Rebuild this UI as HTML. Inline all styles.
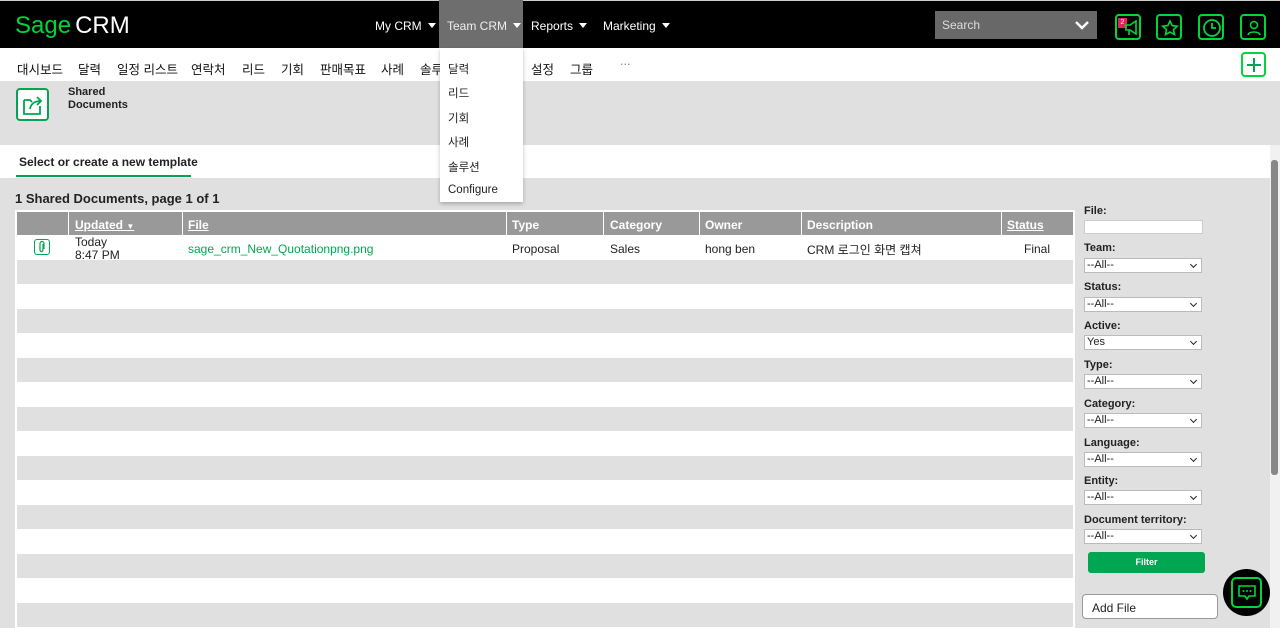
<!DOCTYPE html>
<html><head><meta charset="utf-8"><style>
*{box-sizing:border-box;margin:0;padding:0}
body{width:1280px;height:628px;overflow:hidden;background:#e0e0e0;font-family:"Liberation Sans","Noto Sans CJK KR",sans-serif;font-size:12px;color:#222;position:relative}
.abs{position:absolute}
#top{left:0;top:0;width:1280px;height:48px;background:#000;border-top:1px solid #ccc}
.nav{color:#fff;font-size:12px;top:18px}
.car{display:inline-block;border-left:4px solid transparent;border-right:4px solid transparent;border-top:5px solid #fff;margin-left:6px;vertical-align:2px}
#sub{left:0;top:48px;width:1280px;height:33px;background:#fff}
#sub span{position:absolute;top:11px;font-size:12.5px;color:#111}
.ib{width:26px;height:26px;border:2px solid #00d639;border-radius:4px}
.dd div{position:absolute;left:8px;font-size:11.5px;color:#222}
.lbl{position:absolute;left:1084px;font-weight:bold;font-size:11px}
.sel{position:absolute;left:1084px;width:118px;height:15px;background:#fff;border:1px solid #bbb;font-size:11px;padding-left:2px;line-height:13px}
.sel:after{content:"";position:absolute;right:5px;top:3px;width:4px;height:4px;border-right:1.5px solid #222;border-bottom:1.5px solid #222;transform:rotate(45deg)}
</style></head><body>
<div id="top" class="abs">
 <div class="abs" style="left:15px;top:11px;font-size:24px;color:#00d639">Sage<span style="color:#fff;margin-left:4px">CRM</span></div>
 <div class="abs nav" style="left:375px">My CRM<span class="car"></span></div>
 <div class="abs" style="left:439px;top:-1px;width:84px;height:48px;background:#6e6e6e"></div>
 <div class="abs nav" style="left:447px;color:#eee">Team CRM<span class="car"></span></div>
 <div class="abs nav" style="left:531px">Reports<span class="car"></span></div>
 <div class="abs nav" style="left:603px">Marketing<span class="car"></span></div>
 <div class="abs" style="left:935px;top:10px;width:162px;height:28px;background:#686868;color:#ddd;padding:7px 7px;font-size:12px">Search
  <svg class="abs" style="right:8px;top:9px" width="14" height="10"><path d="M1 2l6 6 6-6" stroke="#fff" stroke-width="2.4" fill="none"/></svg></div>
 <div class="abs ib" style="left:1115px;top:13px"><div class="abs" style="left:1px;top:2px;width:9px;height:10px;background:#e0245e;color:#fff;font-size:7px;text-align:center;line-height:10px">2</div>
  <svg class="abs" style="left:8px;top:4px" width="14" height="16"><path d="M1 5h4l6-4v13l-6-4H1zM4 10v5" stroke="#00d639" stroke-width="1.6" fill="none"/></svg></div>
 <div class="abs ib" style="left:1156px;top:13px"><svg class="abs" style="left:3px;top:3px" width="18" height="18"><path d="M9 2l2.2 4.6 5 .6-3.7 3.4 1 5L9 13l-4.5 2.6 1-5L1.8 7.2l5-.6z" stroke="#00d639" stroke-width="1.6" fill="none"/></svg></div>
 <div class="abs ib" style="left:1198px;top:13px"><svg class="abs" style="left:2px;top:2px" width="20" height="20"><circle cx="10" cy="10" r="8" stroke="#00d639" stroke-width="1.8" fill="none"/><path d="M10 5v5h4" stroke="#00d639" stroke-width="1.8" fill="none"/></svg></div>
 <div class="abs ib" style="left:1240px;top:13px"><svg class="abs" style="left:3px;top:3px" width="18" height="18"><circle cx="9" cy="6" r="3.5" stroke="#00d639" stroke-width="1.6" fill="none"/><path d="M3 16c1-4 11-4 12 0" stroke="#00d639" stroke-width="1.6" fill="none"/></svg></div>
</div>
<div id="sub" class="abs">
 <span style="left:17px">대시보드</span><span style="left:78px">달력</span><span style="left:117px">일정 리스트</span><span style="left:191px">연락처</span><span style="left:242px">리드</span><span style="left:281px">기회</span><span style="left:320px">판매목표</span><span style="left:381px">사례</span><span style="left:420px">솔루</span><span style="left:531px">설정</span><span style="left:570px">그룹</span><span style="left:620px;top:6px;color:#888">...</span>
 <div class="abs ib" style="left:1241px;top:4px;width:25px;height:25px"><svg class="abs" style="left:2px;top:2px" width="18" height="18"><path d="M9 2v14M2 9h14" stroke="#00a651" stroke-width="2"/></svg></div>
</div>
<div class="abs" style="left:16px;top:88px;width:33px;height:33px;border:2.5px solid #00a651;border-radius:4px;background:#fff"><svg class="abs" style="left:4px;top:4px" width="22" height="22"><path d="M2 6v14h16V12M2 6h6l2 2M8 15c1-6 5-8 11-8M15 3l4 4-4 4" stroke="#00a651" stroke-width="1.8" fill="none"/></svg></div>
<div class="abs" style="left:68px;top:86px;font-weight:bold;font-size:11px;line-height:13px">Shared<br>Documents</div>
<div class="abs" style="left:0;top:145px;width:1270px;height:33px;background:#fff"></div>
<div class="abs" style="left:19px;top:155px;font-size:12px;font-weight:bold;color:#222">Select or create a new template</div>
<div class="abs" style="left:16px;top:175px;width:175px;height:2px;background:#00a651"></div>
<div class="abs" style="left:15px;top:191px;font-weight:bold;font-size:13px">1 Shared Documents, page 1 of 1</div>
<div class="abs" style="left:15px;top:210px;width:1060px;height:418px;background:#fff"></div>
<div class="abs" style="left:17px;top:260px;width:1056px;height:368px;background:repeating-linear-gradient(#e0e0e0 0 24px,#fff 24px 49px)"></div>
<div class="abs" style="left:17px;top:212px;width:1056px;height:23px;background:#999"></div>
<div style="color:#fff;font-weight:bold;font-size:12px">
<div class="abs" style="left:75px;top:218px;text-decoration:underline">Updated <span style="text-decoration:none;font-size:8px">▼</span></div>
<div class="abs" style="left:188px;top:218px;text-decoration:underline">File</div>
<div class="abs" style="left:512px;top:218px">Type</div>
<div class="abs" style="left:610px;top:218px">Category</div>
<div class="abs" style="left:705px;top:218px">Owner</div>
<div class="abs" style="left:807px;top:218px">Description</div>
<div class="abs" style="left:1007px;top:218px;text-decoration:underline">Status</div>
</div>
<div class="abs" style="left:68px;top:212px;width:1px;height:23px;background:#fff"></div><div class="abs" style="left:182px;top:212px;width:1px;height:23px;background:#fff"></div><div class="abs" style="left:506px;top:212px;width:1px;height:23px;background:#fff"></div><div class="abs" style="left:603px;top:212px;width:1px;height:23px;background:#fff"></div><div class="abs" style="left:699px;top:212px;width:1px;height:23px;background:#fff"></div><div class="abs" style="left:801px;top:212px;width:1px;height:23px;background:#fff"></div><div class="abs" style="left:1001px;top:212px;width:1px;height:23px;background:#fff"></div>
<div class="abs" style="left:34px;top:239px;width:16px;height:16px;border:1.5px solid #00a651;border-radius:3px"><svg class="abs" style="left:3px;top:1px" width="8" height="12"><path d="M5 3v6a1.5 1.5 0 0 1-3 0V2.5a2 2 0 0 1 4 0V8" stroke="#00a651" stroke-width="1.2" fill="none"/></svg></div>
<div class="abs" style="left:75px;top:236px;line-height:13px">Today<br>8:47 PM</div>
<div class="abs" style="left:188px;top:242px;color:#00a651">sage_crm_New_Quotationpng.png</div>
<div class="abs" style="left:512px;top:242px">Proposal</div>
<div class="abs" style="left:610px;top:242px">Sales</div>
<div class="abs" style="left:705px;top:242px">hong ben</div>
<div class="abs" style="left:807px;top:241px">CRM 로그인 화면 캡쳐</div>
<div class="abs" style="left:1024px;top:242px">Final</div>

<div class="lbl" style="top:205px">File:</div>
<div class="abs" style="left:1084px;top:220px;width:119px;height:14px;background:#fff;border:1px solid #ccc"></div>
<div class="lbl" style="top:242px">Team:</div><div class="sel" style="top:258px">--All--</div>
<div class="lbl" style="top:281px">Status:</div><div class="sel" style="top:297px">--All--</div>
<div class="lbl" style="top:320px">Active:</div><div class="sel" style="top:335px">Yes</div>
<div class="lbl" style="top:359px">Type:</div><div class="sel" style="top:374px">--All--</div>
<div class="lbl" style="top:398px">Category:</div><div class="sel" style="top:413px">--All--</div>
<div class="lbl" style="top:437px">Language:</div><div class="sel" style="top:452px">--All--</div>
<div class="lbl" style="top:475px">Entity:</div><div class="sel" style="top:490px">--All--</div>
<div class="lbl" style="top:514px">Document territory:</div><div class="sel" style="top:529px">--All--</div>
<div class="abs" style="left:1088px;top:552px;width:117px;height:21px;background:#00a651;border-radius:3px;color:#fff;font-size:9px;font-weight:bold;text-align:center;line-height:21px">Filter</div>
<div class="abs" style="left:1082px;top:594px;width:136px;height:25px;background:#fff;border:1px solid #999;border-radius:4px;padding:6px 9px;font-size:12px">Add File</div>
<div class="abs" style="left:1223px;top:569px;width:47px;height:47px;border-radius:50%;background:#000"><div class="abs" style="left:8px;top:8px;width:31px;height:31px;border:2px solid #00d639;border-radius:5px"><svg class="abs" style="left:4px;top:5px" width="20" height="18"><path d="M2 2h16v10h-6l-2 3-2-3H2z" stroke="#00d639" stroke-width="1.6" fill="none"/><circle cx="6.5" cy="7" r="1" fill="#00d639"/><circle cx="10" cy="7" r="1" fill="#00d639"/><circle cx="13.5" cy="7" r="1" fill="#00d639"/></svg></div></div>
<div class="abs" style="left:1270px;top:145px;width:10px;height:483px;background:#f1f1f1"></div>
<div class="abs" style="left:1271px;top:160px;width:7px;height:315px;background:#888;border-radius:3px"></div>

<div class="abs dd" style="left:440px;top:48px;width:83px;height:154px;background:#fff;box-shadow:0 2px 4px rgba(0,0,0,.25)">
 <div style="top:13px">달력</div><div style="top:37px">리드</div><div style="top:62px">기회</div><div style="top:86px">사례</div><div style="top:111px">솔루션</div><div style="top:136px">Configure</div>
</div>
</body></html>
